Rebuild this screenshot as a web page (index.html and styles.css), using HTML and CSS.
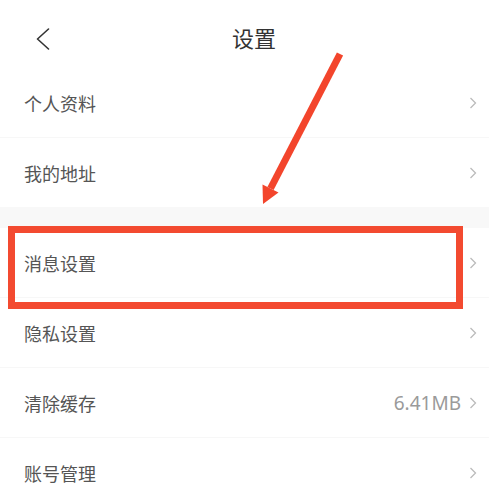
FILE: index.html
```html
<!DOCTYPE html>
<html lang="zh">
<head>
<meta charset="utf-8">
<title>设置</title>
<link rel="stylesheet" href="styles.css">
</head>
<body>
<div class="page">
  <header class="topbar">
    <div class="back">
      <svg width="14" height="22" viewBox="0 0 14 22"><path d="M12.5 1 L1.5 11 L12.5 21" fill="none" stroke="#333" stroke-width="1.6" stroke-linecap="round" stroke-linejoin="round"/></svg>
    </div>
    <h1 class="title">设置</h1>
    <div></div>
  </header>

  <ul class="group">
    <li class="row"><span class="label">个人资料</span><span class="right"><svg class="chev" width="8" height="12" viewBox="0 0 8 12"><path d="M1.5 1 L6.5 6 L1.5 11" fill="none" stroke="#bbb" stroke-width="1.3"/></svg></span></li>
    <li class="row last"><span class="label">我的地址</span><span class="right"><svg class="chev" width="8" height="12" viewBox="0 0 8 12"><path d="M1.5 1 L6.5 6 L1.5 11" fill="none" stroke="#bbb" stroke-width="1.3"/></svg></span></li>
  </ul>
  <div class="spacer"></div>
  <ul class="group">
    <li class="row"><span class="label">消息设置</span><span class="right"><svg class="chev" width="8" height="12" viewBox="0 0 8 12"><path d="M1.5 1 L6.5 6 L1.5 11" fill="none" stroke="#bbb" stroke-width="1.3"/></svg></span></li>
    <li class="row"><span class="label">隐私设置</span><span class="right"><svg class="chev" width="8" height="12" viewBox="0 0 8 12"><path d="M1.5 1 L6.5 6 L1.5 11" fill="none" stroke="#bbb" stroke-width="1.3"/></svg></span></li>
    <li class="row"><span class="label">清除缓存</span><span class="right"><span class="value">6.41MB</span><svg class="chev" width="8" height="12" viewBox="0 0 8 12"><path d="M1.5 1 L6.5 6 L1.5 11" fill="none" stroke="#bbb" stroke-width="1.3"/></svg></span></li>
    <li class="row"><span class="label">账号管理</span><span class="right"><svg class="chev" width="8" height="12" viewBox="0 0 8 12"><path d="M1.5 1 L6.5 6 L1.5 11" fill="none" stroke="#bbb" stroke-width="1.3"/></svg></span></li>
  </ul>

  <div class="highlight"></div>
  <svg class="arrow" width="489" height="493" viewBox="0 0 489 493">
    <line x1="340" y1="54" x2="270.5" y2="188.5" stroke="#f3452c" stroke-width="7"/>
    <polygon points="263,204 262.5,184.5 278.5,192.5" fill="#f3452c"/>
  </svg>
</div>
</body>
</html>
```

FILE: styles.css
```css
* { box-sizing: border-box; }
html, body {
  margin: 0;
  padding: 0;
  background: #fff;
}
body {
  font-family: "Noto Sans CJK SC", "Noto Sans", sans-serif;
  overflow: hidden;
}
.page {
  position: relative;
  width: 489px;
  height: 493px;
  overflow: hidden;
  background: #fff;
}
.topbar {
  height: 68px;
  padding-top: 6px;
  display: grid;
  grid-template-columns: 1fr auto 1fr;
  align-items: center;
}
.back {
  padding-left: 36px;
  padding-top: 4px;
  display: flex;
  align-items: center;
}
.back svg { display: block; }
.title {
  margin: 0;
  padding-left: 19px;
  font-size: 22px;
  font-weight: 400;
  color: #333;
  line-height: 30px;
}
.group {
  list-style: none;
  margin: 0;
  padding: 0;
}
.row {
  height: 70px;
  display: flex;
  align-items: center;
  justify-content: space-between;
  padding: 0 12px 0 24px;
  border-bottom: 1px solid #f7f7f7;
}
.row.last { border-bottom: none; height: 69px; }
.label {
  font-size: 18px;
  color: #555;
  line-height: 24px;
}
.right {
  display: flex;
  align-items: center;
  gap: 8px;
}
.value {
  font-family: "Noto Sans", Roboto, sans-serif;
  font-size: 19px;
  color: #9a9a9a;
  line-height: 24px;
}
.chev { display: block; }
.spacer {
  height: 21px;
  background: #f8f8f8;
}
.highlight {
  position: absolute;
  left: 8px;
  top: 226px;
  width: 455px;
  height: 83px;
  border: 7px solid #f34a30;
}
.arrow {
  position: absolute;
  left: 0;
  top: 0;
  pointer-events: none;
}
```
